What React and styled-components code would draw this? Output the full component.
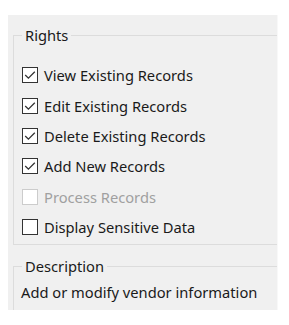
import React from "react"
import styled, { createGlobalStyle } from "styled-components"

const GlobalStyle = createGlobalStyle`
  html, body {
    margin: 0;
    padding: 0;
    background: #ffffff;
  }
  body {
    font-family: "Noto Sans", "Open Sans", sans-serif;
  }
`

const rights = [
  { label: "View Existing Records", checked: true },
  { label: "Edit Existing Records", checked: true },
  { label: "Delete Existing Records", checked: true },
  { label: "Add New Records", checked: true },
  { label: "Process Records", checked: false, disabled: true },
  { label: "Display Sensitive Data", checked: false },
]

const CheckBox = ({ label, checked, disabled }) => (
  <Row $disabled={disabled}>
    <Box $disabled={disabled}>
      {checked && (
        <svg width="14" height="14" viewBox="0 0 14 14">
          <polyline
            points="2.2,7 5.4,10.2 11.8,3.8"
            fill="none"
            stroke="#333"
            strokeWidth="1.3"
          />
        </svg>
      )}
    </Box>
    <span>{label}</span>
  </Row>
)

export default function App() {
  return (
    <>
      <GlobalStyle />
      <Panel>
        <GroupBox>
          <Legend>Rights</Legend>
          <List>
            {rights.map((r) => (
              <CheckBox key={r.label} {...r} />
            ))}
          </List>
        </GroupBox>
        <GroupBox $open>
          <Legend>Description</Legend>
          <Description>Add or modify vendor information</Description>
        </GroupBox>
      </Panel>
    </>
  )
}

const Panel = styled.div`
  margin: 15px 0 0 8px;
  width: 270px;
  height: 295px;
  box-sizing: border-box;
  padding: 10px 0 0 5px;
  background: #f0f0f0;
  border-right: 1px solid #f8f8f8;
  overflow: hidden;
  display: flex;
  flex-direction: column;
  gap: 11px;
`

const GroupBox = styled.fieldset`
  margin: 0;
  width: 320px;
  flex-shrink: 0;
  box-sizing: border-box;
  padding: 0 0 ${(p) => (p.$open ? "40px" : "2px")} 8px;
  border: 1px solid #dcdcdc;
  font-size: 14.7px;
  line-height: 16px;
  color: #1a1a1a;
`

const Legend = styled.legend`
  padding: 0 3px;
  height: 20px;
  line-height: 20px;
  font-size: 14.7px;
  color: #1a1a1a;
`

const List = styled.div`
  display: flex;
  flex-direction: column;
  padding-top: 15px;
`

const Row = styled.div`
  display: flex;
  align-items: center;
  gap: 6px;
  height: 30.4px;
  color: ${(p) => (p.$disabled ? "#a0a0a0" : "#1a1a1a")};
`

const Box = styled.div`
  width: 16px;
  height: 16px;
  flex-shrink: 0;
  box-sizing: border-box;
  border: 1px solid ${(p) => (p.$disabled ? "#cccccc" : "#333333")};
  background: #ffffff;
  display: flex;
  align-items: center;
  justify-content: center;
`

const Description = styled.div`
  padding-top: 8px;
  margin-left: -1px;
  line-height: 16px;
`
